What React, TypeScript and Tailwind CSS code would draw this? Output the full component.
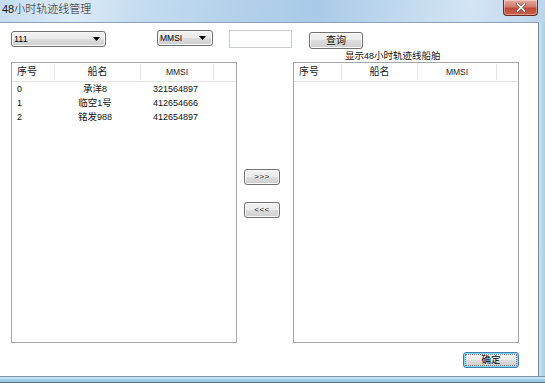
import React from "react";

const CJK = /([\u3400-\u9fff\uff00-\uffef]+)/;

function T({ s, cjk = "text-[9.5px]" }: { s: string; cjk?: string }) {
  const parts = s.split(CJK);
  return (
    <>
      {parts.map((p, i) =>
        i % 2 === 1 ? (
          <span key={i} className={cjk}>
            {p}
          </span>
        ) : (
          <span key={i}>{p}</span>
        )
      )}
    </>
  );
}

function Arrow() {
  return (
    <svg width="7" height="4" viewBox="0 0 7 4">
      <polygon points="0,0 7,0 3.5,4" fill="#000" />
    </svg>
  );
}

type Row = { no: string; name: string; mmsi: string };

function ListBox({ cols, rows }: { cols: number[]; rows: Row[] }) {
  return (
    <div className="w-[226px] h-[281px] border border-[#a5a7ad] bg-white flex flex-col">
      <div className="h-[19px] flex border-b border-[#e3e4e6] text-[#1a1a1a]">
        <div style={{ width: cols[0] }} className="flex items-center pl-[5px] border-r border-[#e3e4e6] my-[1px]">
          <T s="序号" cjk="text-[10px]" />
        </div>
        <div style={{ width: cols[1] }} className="flex items-center justify-center border-r border-[#e3e4e6] my-[1px]">
          <T s="船名" cjk="text-[10px]" />
        </div>
        <div style={{ width: cols[2] }} className="flex items-center justify-center border-r border-[#e3e4e6] my-[1px] text-[8.5px]">
          MMSI
        </div>
        <div className="flex-1" />
      </div>
      {rows.map((r) => (
        <div key={r.no} className="h-[14px] flex items-center text-[#111]">
          <div style={{ width: cols[0] }} className="pl-[5px]">
            {r.no}
          </div>
          <div style={{ width: cols[1] }} className="text-center pr-[6px]">
            <T s={r.name} />
          </div>
          <div style={{ width: cols[2] }} className="pl-[12px]">
            {r.mmsi}
          </div>
        </div>
      ))}
    </div>
  );
}

function Btn({ children, w, h, cls = "" }: { children: React.ReactNode; w: string; h: string; cls?: string }) {
  return (
    <div
      className={`${w} ${h} ${cls} flex items-center justify-center rounded-[3px] border border-[#707070] bg-[linear-gradient(#f2f2f2,#ebebeb_50%,#dddddd_50%,#cfcfcf)] shadow-[inset_0_0_0_1px_#fbfbfb] text-[#111]`}
    >
      {children}
    </div>
  );
}

export default function App() {
  const rows: Row[] = [
    { no: "0", name: "承洋8", mmsi: "321564897" },
    { no: "1", name: "临空1号", mmsi: "412654666" },
    { no: "2", name: "铭发988", mmsi: "412654897" },
  ];
  return (
    <div className="w-[545px] h-[383px] overflow-hidden flex flex-col font-['Liberation_Sans','Noto_Sans_CJK_SC',sans-serif] text-[9px] leading-none bg-[#b8d3ec]">
      {/* title bar */}
      <div className="h-[22px] flex items-start bg-[linear-gradient(100deg,#c6ddf1_0%,#dbeaf7_14%,#c4dcf0_26%,#b2d0ea_45%,#a9cbe8_58%,#bfd8ee_72%,#d3e5f5_86%,#bcd5ec_100%)]">
        <div className="pl-[2px] pt-[4px] text-[11px] text-[#1a1a1a]">
          <T s="48小时轨迹线管理" cjk="text-[11px] font-light" />
        </div>
        <div className="flex-1" />
        <div className="mr-[7px] w-[35px] h-[16px] rounded-b-[4px] border border-t-0 border-[#6e2b22] bg-[linear-gradient(#e8aba0,#d07a6a_45%,#bf4a38_55%,#c8604c)] flex items-center justify-center shadow-[inset_0_0_0_1px_rgba(255,255,255,0.35)]">
          <svg width="10" height="9" viewBox="0 0 10 9">
            <path d="M1.5 1 L8.5 8 M8.5 1 L1.5 8" stroke="#5a2018" strokeWidth="3" strokeLinecap="round" />
            <path d="M1.5 1 L8.5 8 M8.5 1 L1.5 8" stroke="#ffffff" strokeWidth="1.8" strokeLinecap="round" />
          </svg>
        </div>
      </div>
      <div className="flex-1 flex">
        {/* client */}
        <div className="w-[538px] h-[354px] bg-white border-t border-[#8da2b8] flex flex-col">
          <div className="flex items-start pt-[7px] pl-[11px]">
            <div className="mt-[1px] w-[95px] h-[16px] rounded-[3px] border border-[#707070] bg-[linear-gradient(#f2f2f2,#ebebeb_50%,#dddddd_50%,#cfcfcf)] shadow-[inset_0_0_0_1px_#fbfbfb] flex items-center pl-[2px] pr-[5px]">
              <span className="flex-1">111</span>
              <Arrow />
            </div>
            <div className="ml-[51px] w-[56px] h-[16px] rounded-[3px] border border-[#707070] bg-[linear-gradient(#f2f2f2,#ebebeb_50%,#dddddd_50%,#cfcfcf)] shadow-[inset_0_0_0_1px_#fbfbfb] flex items-center pl-[2px] pr-[6px]">
              <span className="flex-1 text-[8.5px]">MMSI</span>
              <Arrow />
            </div>
            <div className="ml-[16px] w-[63px] h-[18px] border border-[#c8cbd1] bg-white" />
            <Btn w="w-[54px]" h="h-[17px]" cls="ml-[17px] mt-[2px]">
              <T s="查询" cjk="text-[10px]" />
            </Btn>
          </div>
          <div className="h-[14px] pl-[345px] pt-[2px] text-[#111]">
            <T s="显示48小时轨迹线船舶" />
          </div>
          <div className="flex pl-[11px] mt-[-1px]">
            <ListBox cols={[43, 86, 73]} rows={rows} />
            <div className="w-[56px] flex flex-col pl-[7px]">
              <Btn w="w-[36px]" h="h-[16px]" cls="mt-[107px]">
                <span className="text-[8px] tracking-[0.5px]">&gt;&gt;&gt;</span>
              </Btn>
              <Btn w="w-[36px]" h="h-[16px]" cls="mt-[17px]">
                <span className="text-[8px] tracking-[0.5px]">&lt;&lt;&lt;</span>
              </Btn>
            </div>
            <ListBox cols={[48, 76, 79]} rows={[]} />
          </div>
          <div className="pl-[463px] mt-[9px]">
            <div className="w-[56px] h-[16px] rounded-[3px] border border-[#3c7fb1] shadow-[inset_0_0_0_1px_#7fd6f7] p-[1px] bg-[linear-gradient(#f2f2f2,#ebebeb_50%,#dddddd_50%,#cfcfcf)]">
              <div className="w-full h-full border border-dotted border-[#777] flex items-center justify-center">
                <T s="确定" cjk="text-[9.5px]" />
              </div>
            </div>
          </div>
        </div>
        {/* right frame */}
        <div className="flex-1 border-l border-[#6f8aa3] bg-[linear-gradient(90deg,#c9e3f2,#a7cfe6)]" />
      </div>
      {/* bottom frame */}
      <div className="h-[7px] border-t border-[#7f93a6] bg-[linear-gradient(#d8eef8,#a6d3ea_50%,#92c6e2)] border-b border-b-[#5e7284]" />
    </div>
  );
}
